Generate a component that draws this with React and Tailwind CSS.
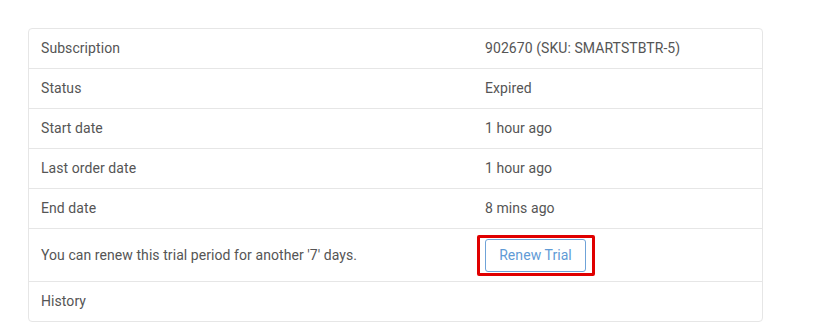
const rows = [
  ['Subscription', '902670 (SKU: SMARTSTBTR-5)'],
  ['Status', 'Expired'],
  ['Start date', '1 hour ago'],
  ['Last order date', '1 hour ago'],
  ['End date', '8 mins ago'],
];

export default function App() {
  return (
    <div
      className="w-[830px] h-[334px] bg-white pt-[28px] pl-[28px]"
      style={{ fontFamily: 'Roboto, "Liberation Sans", sans-serif' }}
    >
      <div className="w-[735px] border border-[#e6e6e6] rounded-[4px] text-[14px] tracking-[0.07px] text-[#555]">
        {rows.map(([label, value]) => (
          <div key={label} className="flex h-[40px] items-center border-b border-[#e6e6e6]">
            <div className="w-[444px] pl-[12px]">{label}</div>
            <div className="pl-[12px]">{value}</div>
          </div>
        ))}
        <div className="flex h-[53px] items-center border-b border-[#e6e6e6]">
          <div className="w-[444px] pl-[12px]">You can renew this trial period for another '7' days.</div>
          <div className="pl-[4px]">
            <div className="border-[3px] border-[#e00000] rounded-[2px] pl-[5px] pr-[6px] py-[1px]">
              <button className="h-[33px] w-[101px] border border-[#6fa3d8] rounded-[3px] text-[#5f9bd6] text-[14px] bg-white">
                Renew Trial
              </button>
            </div>
          </div>
        </div>
        <div className="flex h-[39px] items-center">
          <div className="pl-[12px]">History</div>
        </div>
      </div>
    </div>
  );
}
